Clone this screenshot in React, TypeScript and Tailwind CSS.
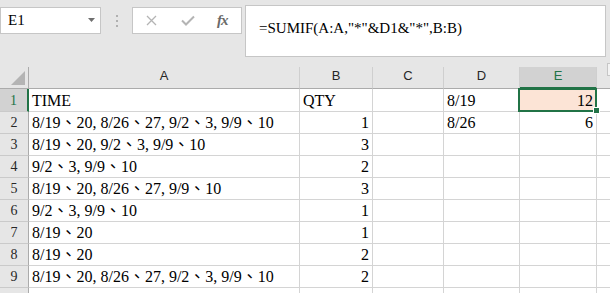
import React from "react";

const data: [string, string, string, string, string][] = [
  ["TIME", "QTY", "", "8/19", "12"],
  ["8/19、20, 8/26、27, 9/2、3, 9/9、10", "1", "", "8/26", "6"],
  ["8/19、20, 9/2、3, 9/9、10", "3", "", "", ""],
  ["9/2、3, 9/9、10", "2", "", "", ""],
  ["8/19、20, 8/26、27, 9/9、10", "3", "", "", ""],
  ["9/2、3, 9/9、10", "1", "", "", ""],
  ["8/19、20", "1", "", "", ""],
  ["8/19、20", "2", "", "", ""],
  ["8/19、20, 8/26、27, 9/2、3, 9/9、10", "2", "", "", ""],
  ["", "", "", "", ""],
];

const isNum = (s: string) => /^\d+$/.test(s);

export default function App() {
  const cols = ["A", "B", "C", "D", "E"];
  return (
    <div className="w-[610px] h-[293px] overflow-hidden bg-[#e6e6e6] relative font-['Liberation_Serif','Noto_Sans_CJK_TC',serif]">
      {/* Top bar */}
      <div className="h-[67px] flex items-start">
        <div className="mt-[7px] w-[101px] h-[27px] bg-white border border-[#c6c6c6] flex items-center justify-between pl-[7px] pr-[4px]">
          <span className="text-[15px] leading-none text-black">E1</span>
          <svg width="8" height="5" viewBox="0 0 8 5">
            <path d="M0 0 L7 0 L3.5 4 Z" fill="#6f6f6f" />
          </svg>
        </div>
        <div className="ml-[15px] mt-[15px] w-[2px] flex flex-col gap-[3px]">
          <div className="w-[2px] h-[2px] bg-[#b0b0b0]" />
          <div className="w-[2px] h-[2px] bg-[#b0b0b0]" />
          <div className="w-[2px] h-[2px] bg-[#b0b0b0]" />
        </div>
        <div className="ml-[14px] mt-[7px] w-[110px] h-[27px] bg-white border border-[#c6c6c6] flex items-center pl-[13px]">
          <svg width="11" height="11" viewBox="0 0 11 11">
            <path d="M1 1 L10 10 M10 1 L1 10" stroke="#b4b4b4" strokeWidth="1.3" fill="none" />
          </svg>
          <svg width="14" height="11" viewBox="0 0 14 11" className="ml-[24px]">
            <path d="M1 5.5 L5 9.5 L13 1.5" stroke="#b4b4b4" strokeWidth="2" fill="none" />
          </svg>
          <span className="ml-[22px] text-[15px] leading-none italic font-bold text-[#6a6a6a] tracking-[-1px]">fx</span>
        </div>
        <div className="ml-[3px] mt-[5px] w-[361px] h-[52px] bg-white border border-[#c6c6c6] pl-[13px] pt-[10px]">
          <span className="text-[15px] leading-[18px] text-black">=SUMIF(A:A,"*"&amp;D1&amp;"*",B:B)</span>
        </div>
      </div>
      <div className="absolute left-[607px] top-[63px] w-[10px] h-[13px] bg-[#f3f3f3] border border-[#c6c6c6]" />

      {/* Grid */}
      <div className="grid grid-cols-[29px_271px_73px_71px_76px_77px_1fr] grid-rows-[22px_23px_repeat(9,22px)]">
        <div className="bg-[#e6e6e6] border-r border-b border-[#ababab] relative">
          <svg width="15" height="15" viewBox="0 0 15 15" className="absolute left-[11px] top-[4px]">
            <path d="M14 0 L14 14 L0 14 Z" fill="#b4b4b4" />
          </svg>
        </div>
        {cols.map((c) => {
          const sel = c === "E";
          return (
            <div
              key={c}
              className={
                sel
                  ? "bg-[#d2d2d2] border-r border-r-[#cfcfcf] border-b-2 border-b-[#217346] flex items-center justify-center pb-[3px] font-['Liberation_Sans',sans-serif] text-[13px] text-[#217346]"
                  : "bg-[#e6e6e6] border-r border-r-[#cfcfcf] border-b border-b-[#ababab] flex items-center justify-center pb-[4px] font-['Liberation_Sans',sans-serif] text-[13px] text-[#262626]"
              }
            >
              {c}
            </div>
          );
        })}
        <div className="bg-[#e6e6e6] border-b border-[#ababab]" />

        {data.map((r, i) => {
          const rowSel = i === 0;
          return (
            <React.Fragment key={i}>
              <div
                className={
                  rowSel
                    ? "bg-[#d2d2d2] border-r-2 border-r-[#217346] border-b border-b-[#cacaca] flex items-center justify-center text-[14px] text-[#217346]"
                    : "bg-[#e6e6e6] border-r border-r-[#ababab] border-b border-b-[#cacaca] flex items-center justify-center text-[14px] text-[#262626]"
                }
              >
                {i < 9 ? i + 1 : ""}
              </div>
              {r.map((v, j) => {
                const isE1 = i === 0 && j === 4;
                return (
                  <div
                    key={j}
                    className={
                      (isE1 ? "bg-[#fce4d6] relative " : "bg-white ") +
                      "border-r border-b border-[#d4d4d4] flex items-end whitespace-nowrap overflow-visible text-[16px] leading-[16px] text-black pb-[2px] " +
                      (isNum(v) ? "justify-end pr-[3px]" : "justify-start pl-[3px]")
                    }
                  >
                    <span>{v}</span>
                    {isE1 && (
                      <>
                        <div className="absolute left-[-2px] top-[-1px] w-[79px] h-[24px] border-2 border-[#217346] z-10" />
                        <div className="absolute left-[73px] top-[18px] w-[7px] h-[7px] bg-[#217346] border border-white z-20" />
                      </>
                    )}
                  </div>
                );
              })}
              <div className="bg-white border-b border-[#d4d4d4]" />
            </React.Fragment>
          );
        })}
      </div>
    </div>
  );
}
